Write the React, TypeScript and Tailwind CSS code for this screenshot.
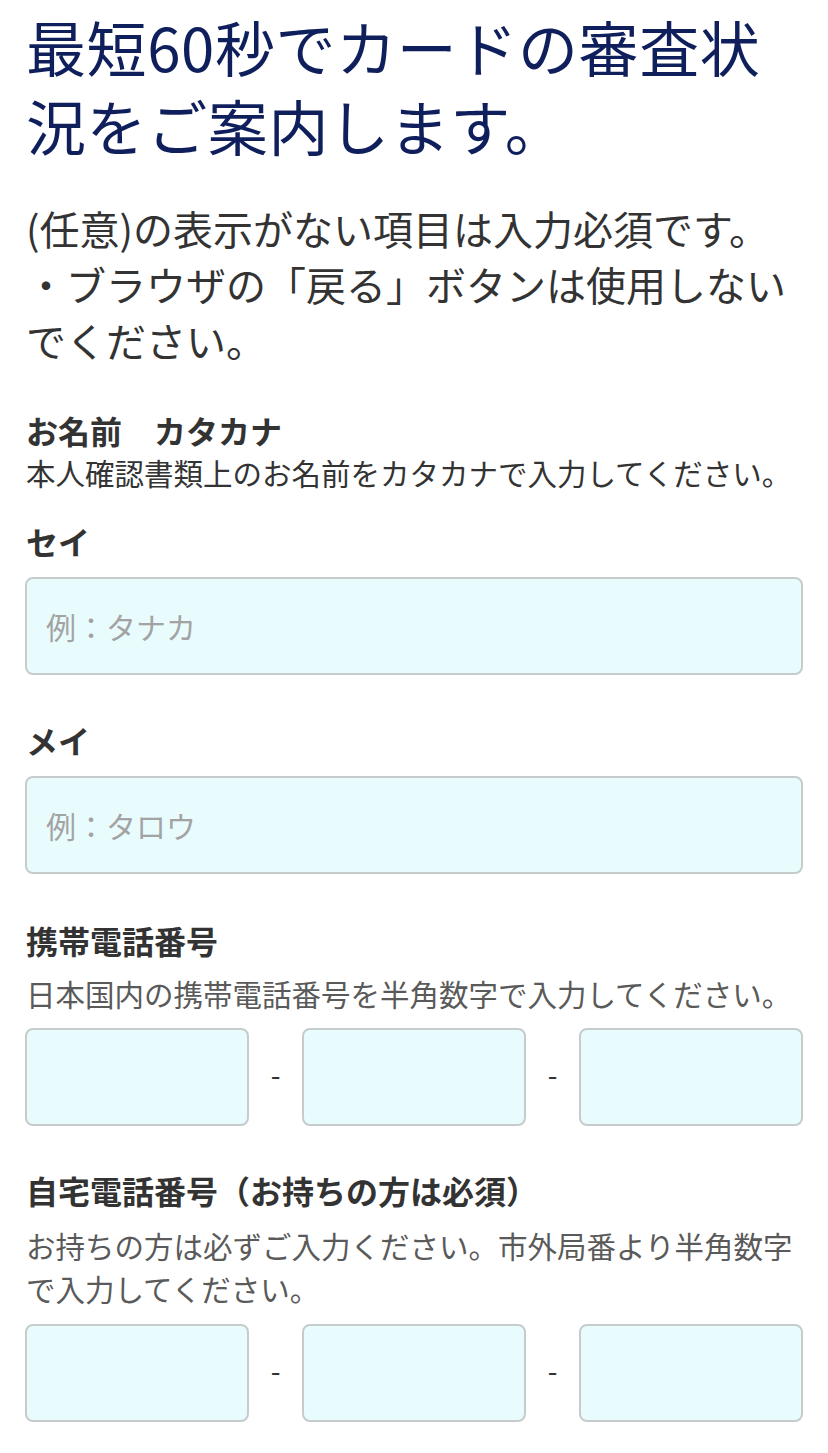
const font = {
  fontFamily: '"Noto Sans CJK JP", "Noto Sans", sans-serif',
}

function TextBox({ placeholder }: { placeholder?: string }) {
  return (
    <input
      type="text"
      placeholder={placeholder}
      className="block w-full h-[98px] rounded-[8px] border-2 border-[#c6cccc] bg-[#e9fcfd] px-[19px] text-[30px] text-[#333] placeholder:text-[#a3a3a3] outline-none"
      style={font}
    />
  )
}

function PhoneRow() {
  return (
    <div className="flex items-center">
      <div className="flex-1">
        <TextBox />
      </div>
      <span className="w-[53px] pb-[6px] text-center text-[28px] text-[#333]">-</span>
      <div className="flex-1">
        <TextBox />
      </div>
      <span className="w-[53px] pb-[6px] text-center text-[28px] text-[#333]">-</span>
      <div className="flex-1">
        <TextBox />
      </div>
    </div>
  )
}

function Label({ children }: { children: React.ReactNode }) {
  return (
    <p className="text-[32px] leading-[40px] font-bold text-[#333]">{children}</p>
  )
}

export default function App() {
  return (
    <div className="min-h-screen bg-white pl-[25px] pr-[25px] pt-[6px] pb-[31px]" style={font}>
      {/* Heading */}
      <h1 className="pl-px text-[60px] leading-[79px] tracking-[0.6px] font-normal text-[#0f1f5c]">
        最短60秒でカードの審査状況をご案内します。
      </h1>

      <div className="mt-[36px] pl-px text-[40px] leading-[56px] text-[#333]">
        <p>(任意)の表示がない項目は入力必須です。</p>
        <p>・ブラウザの「戻る」ボタンは使用しないでください。</p>
      </div>

      {/* Name */}
      <div className="mt-[42px] pl-px">
        <Label>お名前　カタカナ</Label>
        <p className="text-[29.5px] leading-[44px] text-[#333]">
          本人確認書類上のお名前をカタカナで入力してください。
        </p>
      </div>

      <div className="mt-[27px]">
        <div className="pl-px">
          <Label>セイ</Label>
        </div>
        <div className="mt-[16px]">
          <TextBox placeholder="例：タナカ" />
        </div>
      </div>

      <div className="mt-[45px]">
        <div className="pl-px">
          <Label>メイ</Label>
        </div>
        <div className="mt-[16px]">
          <TextBox placeholder="例：タロウ" />
        </div>
      </div>

      {/* Mobile */}
      <div className="mt-[46px]">
        <div className="pl-px">
          <Label>携帯電話番号</Label>
          <p className="mt-[11px] text-[29.5px] leading-[44px] text-[#5a5a5a]">
            日本国内の携帯電話番号を半角数字で入力してください。
          </p>
        </div>
        <div className="mt-[13px]">
          <PhoneRow />
        </div>
      </div>

      {/* Home */}
      <div className="mt-[44px]">
        <div className="pl-px">
          <Label>自宅電話番号（お持ちの方は必須）</Label>
          <p className="mt-[14px] text-[29.5px] leading-[43px] text-[#5a5a5a]">
            お持ちの方は必ずご入力ください。市外局番より半角数字で入力してください。
          </p>
        </div>
        <div className="mt-[14px]">
          <PhoneRow />
        </div>
      </div>
    </div>
  )
}
